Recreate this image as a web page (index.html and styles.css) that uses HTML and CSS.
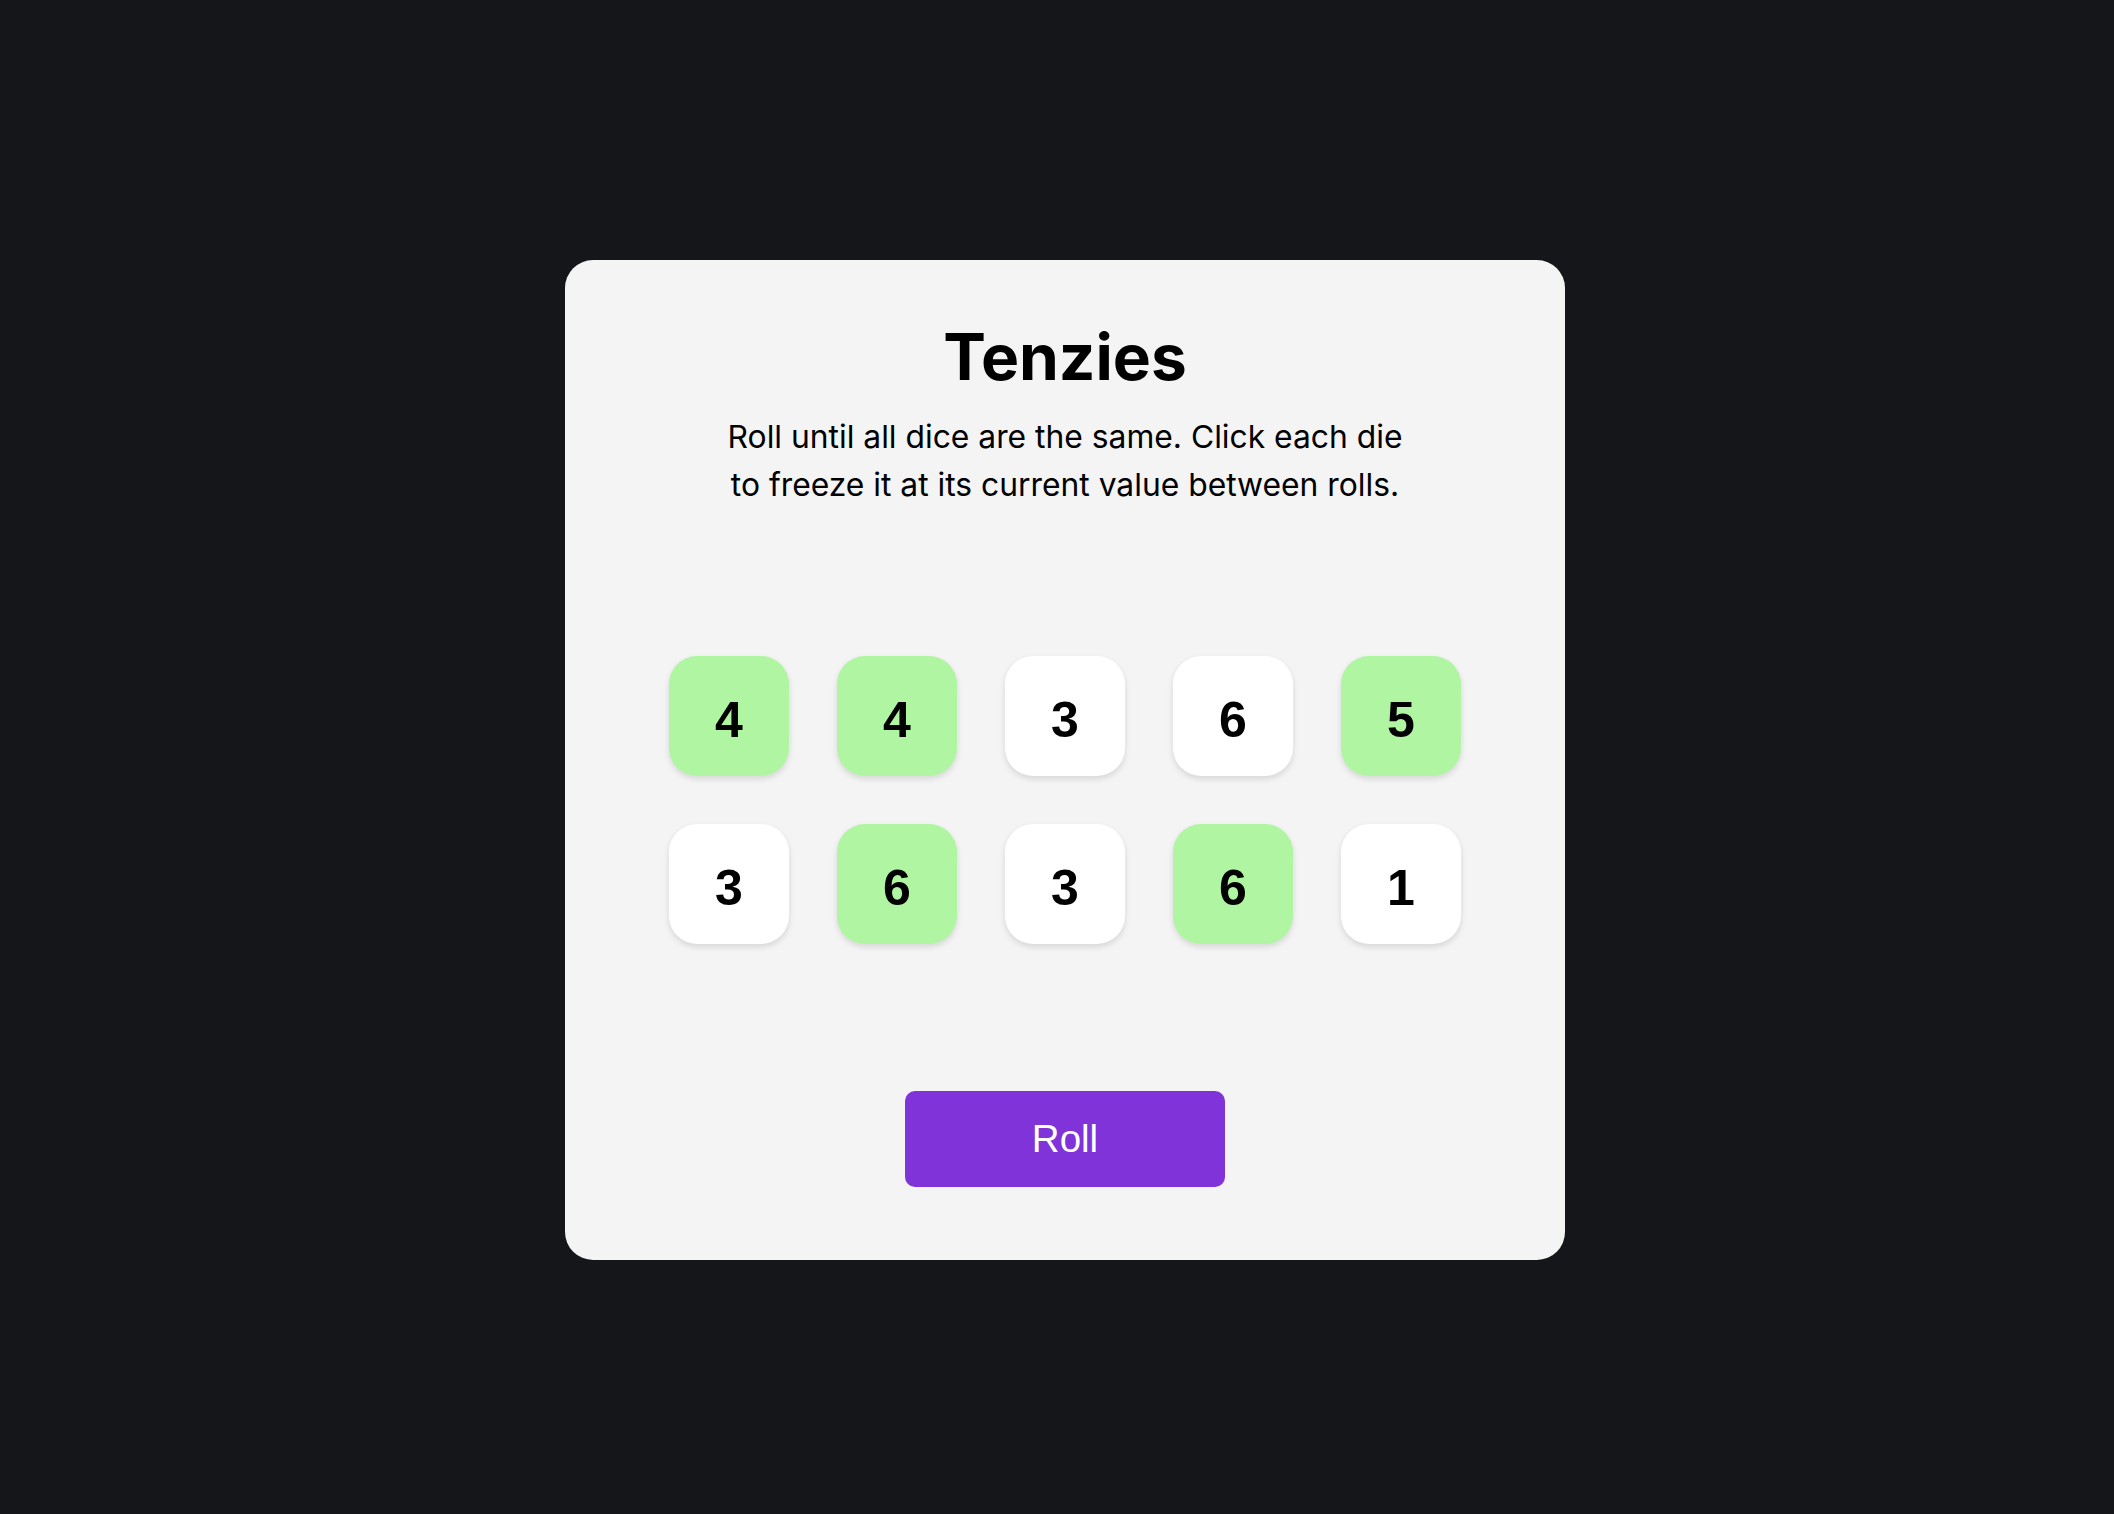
FILE: index.html
```html
<!DOCTYPE html>
<html lang="en">
<head>
<meta charset="utf-8">
<title>Tenzies</title>
<link rel="stylesheet" href="styles.css">
</head>
<body>
  <main class="card">
    <h1 class="title">Tenzies</h1>
    <p class="instructions">Roll until all dice are the same. Click each die to freeze it at its current value between rolls.</p>
    <div class="dice">
      <button class="die held">4</button>
      <button class="die held">4</button>
      <button class="die">3</button>
      <button class="die">6</button>
      <button class="die held">5</button>
      <button class="die">3</button>
      <button class="die held">6</button>
      <button class="die">3</button>
      <button class="die held">6</button>
      <button class="die">1</button>
    </div>
    <button class="roll">Roll</button>
  </main>
</body>
</html>
```
FILE: styles.css
```css
* {
  box-sizing: border-box;
}

html, body {
  margin: 0;
  height: 100%;
}

body {
  background: #14161a;
  padding: 6px 0 0 16px;
  display: flex;
  align-items: center;
  justify-content: center;
  font-family: Inter, "Noto Sans", sans-serif;
}

.card {
  width: 1000px;
  height: 1000px;
  background: #f4f4f4;
  border-radius: 28px;
  padding-top: 58px;
  display: flex;
  flex-direction: column;
  align-items: center;
}

.title {
  margin: 0;
  font-size: 64px;
  font-weight: 700;
  line-height: normal;
  color: #000;
}

.instructions {
  margin: 18px 0 0;
  max-width: 700px;
  text-align: center;
  font-size: 31.8px;
  line-height: 48px;
  color: #000;
}

.dice {
  margin-top: 147px;
  display: grid;
  grid-template-columns: repeat(5, 120px);
  grid-auto-rows: 120px;
  gap: 48px;
}

.die {
  border: none;
  border-radius: 28px;
  background: #ffffff;
  box-shadow: 0 3px 6px rgba(0, 0, 0, 0.12);
  font-family: "Liberation Sans", Arial, sans-serif;
  font-weight: 700;
  font-size: 50px;
  color: #000;
  padding: 7px 0 0;
  display: flex;
  align-items: center;
  justify-content: center;
}

.die.held {
  background: #b0f6a2;
}

.roll {
  margin-top: 147px;
  width: 320px;
  height: 96px;
  border: none;
  border-radius: 10px;
  background: #7f33d9;
  color: #ffffff;
  font-family: "Liberation Sans", Arial, sans-serif;
  font-size: 38.5px;
}
```
